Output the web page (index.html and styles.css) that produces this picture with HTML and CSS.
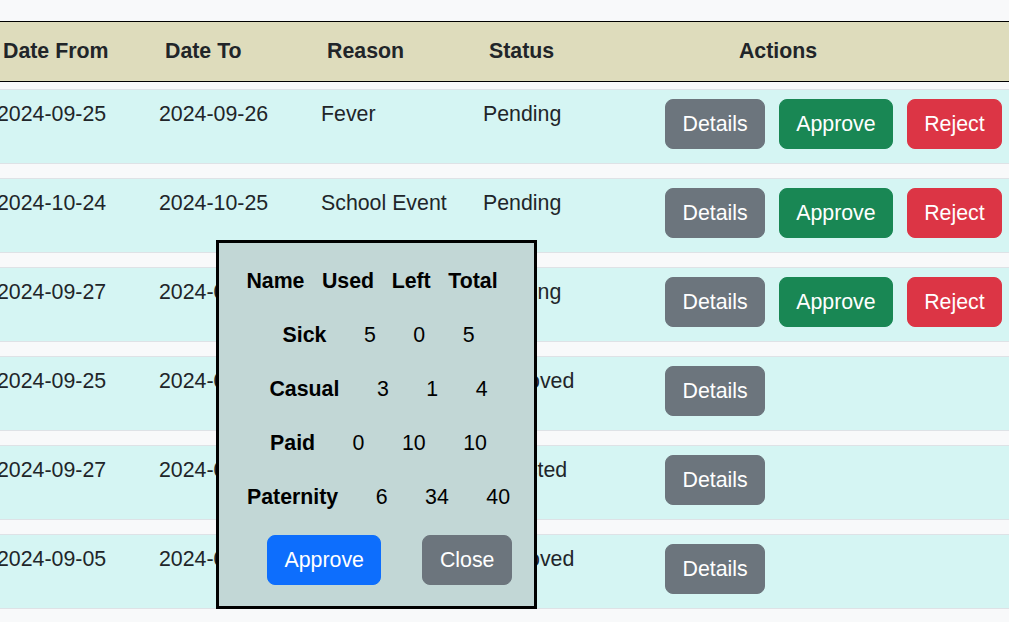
FILE: index.html
```html
<!DOCTYPE html>
<html lang="en">
<head>
<meta charset="utf-8">
<title>Leave Requests</title>
<link rel="stylesheet" href="styles.css">
</head>
<body>
<div class="page">
  <div class="table">
    <div class="thead grid">
      <div class="th">Date From</div>
      <div class="th">Date To</div>
      <div class="th">Reason</div>
      <div class="th">Status</div>
      <div class="th th-actions">Actions</div>
    </div>

    <div class="tr grid">
      <div class="td">2024-09-25</div>
      <div class="td">2024-09-26</div>
      <div class="td">Fever</div>
      <div class="td">Pending</div>
      <div class="td actions">
        <button class="btn btn-secondary">Details</button>
        <button class="btn btn-success">Approve</button>
        <button class="btn btn-danger">Reject</button>
      </div>
    </div>

    <div class="tr grid">
      <div class="td">2024-10-24</div>
      <div class="td">2024-10-25</div>
      <div class="td">School Event</div>
      <div class="td">Pending</div>
      <div class="td actions">
        <button class="btn btn-secondary">Details</button>
        <button class="btn btn-success">Approve</button>
        <button class="btn btn-danger">Reject</button>
      </div>
    </div>

    <div class="tr grid">
      <div class="td">2024-09-27</div>
      <div class="td">2024-09-28</div>
      <div class="td">Family</div>
      <div class="td">Pending</div>
      <div class="td actions">
        <button class="btn btn-secondary">Details</button>
        <button class="btn btn-success">Approve</button>
        <button class="btn btn-danger">Reject</button>
      </div>
    </div>

    <div class="tr grid">
      <div class="td">2024-09-25</div>
      <div class="td">2024-09-26</div>
      <div class="td">Cold</div>
      <div class="td">Approved</div>
      <div class="td actions">
        <button class="btn btn-secondary">Details</button>
      </div>
    </div>

    <div class="tr grid">
      <div class="td">2024-09-27</div>
      <div class="td">2024-09-28</div>
      <div class="td">Trip</div>
      <div class="td">Rejected</div>
      <div class="td actions">
        <button class="btn btn-secondary">Details</button>
      </div>
    </div>

    <div class="tr grid">
      <div class="td">2024-09-05</div>
      <div class="td">2024-09-06</div>
      <div class="td">Wedding</div>
      <div class="td">Approved</div>
      <div class="td actions">
        <button class="btn btn-secondary">Details</button>
      </div>
    </div>
  </div>

  <div class="modal">
    <div class="mrow mhead">
      <span>Name</span><span>Used</span><span>Left</span><span>Total</span>
    </div>
    <div class="mrow">
      <span class="lbl">Sick</span><span>5</span><span>0</span><span>5</span>
    </div>
    <div class="mrow">
      <span class="lbl">Casual</span><span>3</span><span>1</span><span>4</span>
    </div>
    <div class="mrow">
      <span class="lbl">Paid</span><span>0</span><span>10</span><span>10</span>
    </div>
    <div class="mrow">
      <span class="lbl">Paternity</span><span>6</span><span>34</span><span>40</span>
    </div>
    <div class="mbtns">
      <button class="btn btn-primary">Approve</button>
      <button class="btn btn-secondary">Close</button>
    </div>
  </div>
</div>
</body>
</html>
```

FILE: styles.css
```css
html, body {
  margin: 0;
  padding: 0;
  background: #f8f9fa;
  overflow: hidden;
}

body {
  width: 1009px;
  height: 622px;
  font-family: "Liberation Sans", Arial, sans-serif;
  font-size: 21.33px;
  line-height: 32px;
  color: #212529;
}

.page {
  position: relative;
  width: 1009px;
  height: 622px;
  overflow: hidden;
}

.table {
  margin-left: -3px;
  width: 1012px;
  padding-top: 21px;
}

.grid {
  display: grid;
  grid-template-columns: 162px 162px 162px 162px 266px;
}

.thead {
  background: #dedcbc;
  border-top: 1px solid #000;
  border-bottom: 1px solid #000;
  padding: 13px 0 14px;
}

.th {
  font-weight: bold;
  padding-left: 6px;
  white-space: nowrap;
}

.th-actions {
  padding-left: 0;
  text-align: center;
}

.tr {
  background: #d5f5f3;
  border-top: 1px solid #dee2e6;
  border-bottom: 1px solid #dee2e6;
  height: 75px;
  box-sizing: border-box;
  margin-top: 14px;
  align-items: start;
}

.thead + .tr {
  margin-top: 7px;
}

.td {
  padding-top: 8px;
  white-space: nowrap;
}

.actions {
  display: flex;
  gap: 13.5px;
  padding: 9px 0 0 20px;
}

.btn {
  flex-shrink: 0;
  font-family: "Liberation Sans", Arial, sans-serif;
  font-size: 21.33px;
  line-height: 32px;
  padding: 8px 16.5px;
  border: 1px solid transparent;
  border-radius: 8px;
  color: #fff;
  cursor: pointer;
  margin: 0;
}

.btn-secondary { background: #6c757d; border-color: #6c757d; }
.btn-success { background: #198754; border-color: #198754; }
.btn-danger { background: #dc3545; border-color: #dc3545; }
.btn-primary { background: #0d6efd; border-color: #0d6efd; }

.modal {
  position: absolute;
  left: 216px;
  top: 240px;
  width: 321px;
  height: 369px;
  box-sizing: border-box;
  border: 3px solid #000;
  background: #c2d7d6;
  padding: 22px 0 21px;
  display: flex;
  flex-direction: column;
  gap: 22px;
  color: #000;
}

.mrow {
  display: flex;
  justify-content: center;
  gap: 37.5px;
  padding-left: 4px;
  white-space: nowrap;
}

.mhead {
  font-weight: bold;
  gap: 17.5px;
  padding-left: 0;
  padding-right: 9px;
}

.lbl {
  font-weight: bold;
}

.mbtns {
  display: flex;
  justify-content: center;
  gap: 41px;
  padding-left: 26px;
}
```
